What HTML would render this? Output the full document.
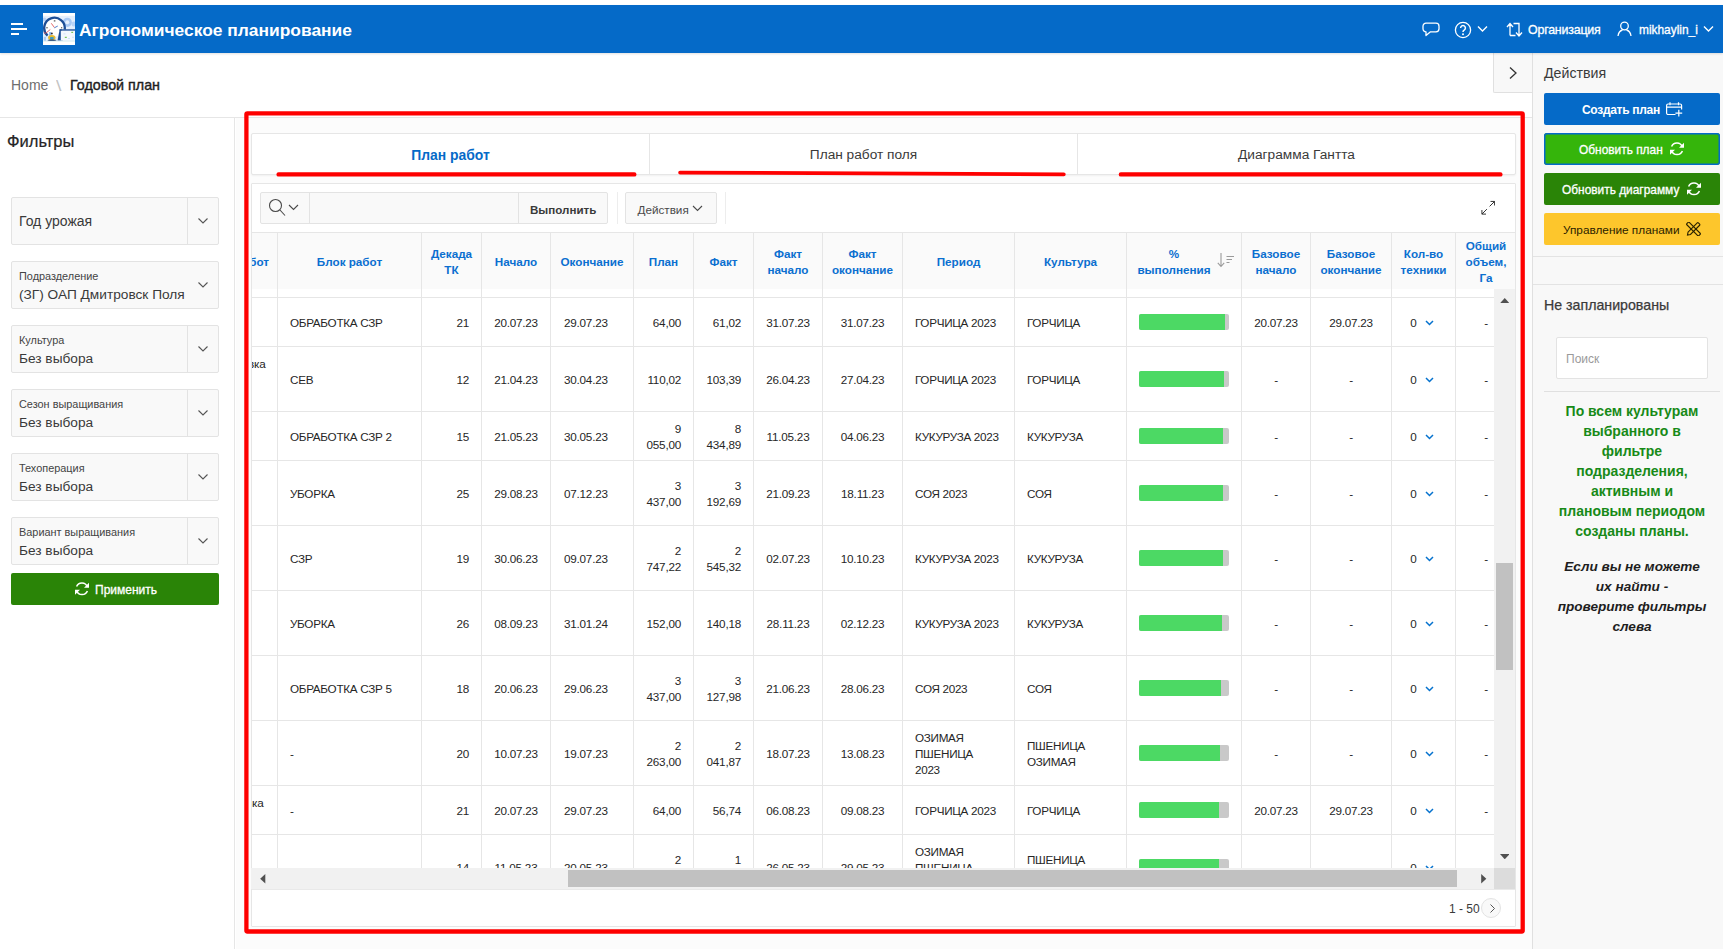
<!DOCTYPE html>
<html lang="ru">
<head>
<meta charset="utf-8">
<title>Агрономическое планирование</title>
<style>
*{box-sizing:border-box;margin:0;padding:0}
html,body{width:1723px;height:949px;overflow:hidden;background:#fff}
body{font-family:"Liberation Sans",sans-serif;color:#262626;position:relative;font-size:12px}
.abs{position:absolute}
svg{display:block}
/* header */
#hdr{left:0;top:5px;width:1723px;height:48px;background:#056ac8;box-shadow:0 1px 2px rgba(0,0,0,.12);z-index:5}
#hdr .t{color:#fff;white-space:nowrap}
#title{left:79px;top:15px;font-size:17.4px;font-weight:bold;line-height:20px}
/* breadcrumb */
#bc{left:0;top:53px;width:1532px;height:65px;background:#fff;border-bottom:1px solid #e6e6e6}
#bc .h{left:11px;top:24px;font-size:14px;color:#6e6e6e;line-height:16px}
#bc .s{left:56px;top:24px;font-size:15px;color:#c4c4c4;line-height:18px;transform:scaleX(1.3);transform-origin:0 0}
#bc .c{left:70px;top:24px;font-size:14.300px;color:#1e1e1e;line-height:16px;-webkit-text-stroke:.4px #1e1e1e}
/* sidebar */
#side{left:0;top:118px;width:235px;height:831px;background:#fff;border-right:1px solid #e6e6e6}
#side h2{position:absolute;left:7px;top:13px;font-size:16.5px;font-weight:normal;color:#262626;line-height:20px;-webkit-text-stroke:.2px #262626}
.fld{position:absolute;left:11px;width:208px;height:48px;background:#f9f9f9;border:1px solid #e3e3e3;border-radius:2px}
.fld .lb{position:absolute;left:7px;top:8px;font-size:10.900px;color:#444;line-height:13px;white-space:nowrap}
.fld .vl{position:absolute;left:7px;top:24px;font-size:13.700px;color:#3a3a3a;line-height:18px;white-space:nowrap}
.fld .big{position:absolute;left:7px;top:14px;font-size:14px;color:#3a3a3a;line-height:18px;white-space:nowrap}
.fld .dv{position:absolute;left:175px;top:-1px;width:1px;height:48px;background:#e3e3e3}
.fld svg{position:absolute;left:185px;top:19px}
#apply{left:11px;top:573px;width:208px;height:32px;background:#2a8407;border-radius:2px;color:#fff}
#apply span{position:absolute;left:84px;top:10px;font-size:12px;line-height:15px;-webkit-text-stroke:.3px #fff;white-space:nowrap}
/* main */
#main{left:236px;top:118px;width:1296px;height:831px;background:#fcfcfc}
/* right panel */
#rp{left:1532px;top:53px;width:191px;height:896px;background:#f8f8f8;border-left:1px solid #e0e0e0}
#tog{left:1493px;top:53px;width:39px;height:40px;background:#f8f8f8;border-left:1px solid #e0e0e0;border-bottom:1px solid #e0e0e0;border-bottom-left-radius:2px}
.rbtn{position:absolute;left:11px;width:176px;height:32px;border-radius:2px;white-space:nowrap}
.rbtn span{position:absolute;top:9px;font-size:12.4px;line-height:15px}

/* main inner */
#tabs{left:15px;top:15px;width:1265px;height:42px;background:#fff;border:1px solid #e6e6e6;border-radius:2px;box-shadow:0 1px 2px rgba(0,0,0,.05)}
.tab{position:absolute;top:0;height:40px;line-height:42px;text-align:center;font-size:13.700px;color:#3a3a3a;white-space:nowrap}
.tab.cur{color:#056ac8;font-weight:bold;font-size:13.900px}
#ir{left:15px;top:65px;width:1265px;height:744px;background:#fff;border:1px solid #e6e6e6;border-radius:1px}
#sb{left:9px;top:8px;width:348px;height:32px;background:#f9f9f9;border:1px solid #e3e3e3;border-radius:2px}
#sb .d1{left:48px;top:0;width:1px;height:30px;background:#e3e3e3}
#sb .d2{left:257px;top:0;width:1px;height:30px;background:#e3e3e3}
#sb .go{left:269px;top:9px;font-size:11.600px;line-height:15px;font-weight:bold;color:#3a3a3a}
.vsep{top:8px;width:1px;height:32px;background:#ededed}
#act{left:374px;top:8px;width:92px;height:32px;background:#f9f9f9;border:1px solid #e3e3e3;border-radius:2px}
#act span{position:absolute;left:11.500px;top:9px;font-size:11.700px;line-height:15px;color:#4a4a4a}
#tw{left:1px;top:48px;width:1263px;height:636px;overflow:hidden}
#tb{position:absolute;left:-2px;top:0;border-collapse:separate;border-spacing:0;table-layout:fixed;width:1266px}
#tb th{height:57px;background:#fafafa;border-top:1px solid #e6e6e6;border-left:1px solid #e6e6e6;color:#0b6fd0;font-weight:bold;font-size:11.7px;line-height:16px;text-align:center;vertical-align:middle;padding:2px 0 0;position:relative;white-space:nowrap}
#tb th.h0{border-left:0;overflow:hidden}
#tb th.h0 span{position:absolute;right:8px;top:21px}
#tb .srt{position:absolute;right:7px;top:20px}
#tb tr.gap td{height:8px;border-left:1px solid #e6e6e6;padding:0}
#tb td{border-top:1px solid #e6e6e6;border-left:1px solid #e6e6e6;font-size:11.700px;letter-spacing:-.22px;line-height:16px;color:#262626;vertical-align:middle;padding:2px 12px 0;position:relative}
#tb tr.gap td{border-top:0}
#tb td.c0{border-left:0;padding:0;overflow:hidden}
#tb tr.gap td:first-child{border-left:0}
#tb td.c0 span{position:absolute;white-space:nowrap}
#tb td.nr{text-align:right}
#tb td.dc{text-align:center;padding:2px 0 0}
#tb td.tx{letter-spacing:-.3px;font-size:11.700px}
#tb td.lc{text-align:left;padding-left:13px}
#tb th.hs{padding-right:20px}
#tb td.pb{padding:0}
.bar{position:absolute;left:12px;top:50%;margin-top:-8px;width:90px;height:16px;background:#c9c9c9;border-radius:2px;overflow:hidden}
.bar i{display:block;height:16px;background:#4cd964}
.cv{display:inline-block;margin-left:5px;vertical-align:1px}
#tb td.kt{padding-right:3px}
#vs{left:1243px;top:105px;width:21px;height:579px;background:#f1f1f1}
#hs{left:0;top:684px;width:1243px;height:21px;background:#f1f1f1}
.th{background:#c1c1c1}
#cr{left:1243px;top:684px;width:21px;height:21px;background:#dcdcdc}
#pg{left:1198px;top:718px;font-size:12px;line-height:15px;color:#3a3a3a;white-space:nowrap}
#pn{left:1230px;top:714px;width:20px;height:20px;border-radius:10px;background:#f9f9f9;border:1px solid #e3e3e3}
#red{left:8.5px;top:-6.5px;width:1280px;height:821px;border:4px solid #fe0000;border-radius:3px}
.ru{top:54px;height:4px;background:#fe0000;border-radius:2px}
</style>
</head>
<body>
<!-- HEADER -->
<div id="hdr" class="abs">
  <svg class="abs" style="left:10px;top:17px" width="18" height="14" viewBox="0 0 18 14"><path d="M1 2h12M1 7h16M1 12h8" stroke="#fff" stroke-width="1.8" fill="none"/></svg>
  <svg class="abs" style="left:43px;top:8px" width="32" height="32" viewBox="0 0 32 32">
    <rect width="32" height="32" fill="#fff"/>
    <rect y="2.800" width="32" height="25" fill="#e4effd"/>
    <circle cx="24.300" cy="9.300" r="4.600" fill="#a9c9f4"/><circle cx="24.300" cy="9.300" r="2" fill="#e4effd"/>
    <circle cx="31" cy="11" r="2.500" fill="#b9d3f6"/>
    <circle cx="1.500" cy="6.500" r="2" fill="#b9d3f6"/>
    <circle cx="11.600" cy="14.500" r="9.200" fill="#fff"/>
    <path d="M4.600 22.700A10.300 10.300 0 1 1 21.700 16.500" stroke="#1d4e96" stroke-width="2.300" fill="none"/>
    <path d="M11.400 14.500L8.300 10.300" stroke="#e2575a" stroke-width=".9"/>
    <path d="M11.400 14.800L14.800 13" stroke="#3d6fc4" stroke-width=".9"/>
    <path d="M.8 19.300l1.500 1.200 5-4" stroke="#e2575a" stroke-width=".9" fill="none"/>
    <rect x="10.800" y="7.300" width="1.600" height="1.200" fill="#555"/><rect x="3.400" y="14" width="1.200" height="1.400" fill="#555"/><rect x="18.200" y="14" width="1" height="1.400" fill="#555"/>
    <rect x="6.100" y="19" width="1.900" height="5" fill="#8fb8f0"/>
    <rect x=".8" y="23.800" width="2.200" height="4" fill="#a9c9f4"/>
    <path d="M16.700 16.300h2l1 11.300h-5.200z" fill="#1d4e96"/>
    <rect x="16.500" y="16.300" width="15.500" height="1.500" fill="#1d4e96"/>
    <rect x="17.800" y="17.800" width="14.200" height="9.700" fill="#f4f8fe"/>
    <rect x="28.300" y="18.800" width="1.800" height="1.100" fill="#6cc04a"/><rect x="21.800" y="23.800" width="2" height="1.100" fill="#6cc04a"/>
    <rect x="20.500" y="20.500" width="2" height=".8" fill="#c9dcf8"/><rect x="29" y="23.800" width="2" height=".8" fill="#c9dcf8"/><rect x="25" y="25" width="2" height=".8" fill="#c9dcf8"/>
    <ellipse cx="8.800" cy="24.600" rx="3.700" ry="2.700" fill="#e9b92e"/>
    <circle cx="8.800" cy="20.600" r="1" fill="#2b2b3a"/>
    <rect x="7" y="24" width="3.600" height="2.400" rx=".4" fill="#3f9dc2"/>
    <ellipse cx="9" cy="27.300" rx="4.500" ry=".7" fill="#1d3c6e"/>
    <rect x="0" y="27.800" width="32" height=".8" fill="#bfe3ea"/>
    <rect x="0" y="28.600" width="32" height="3.400" fill="#fff"/>
  </svg>
  <div id="title" class="abs t">Агрономическое планирование</div>
  <svg class="abs" style="left:1422px;top:17px" width="18" height="15" viewBox="0 0 18 15"><path d="M4 1.200h10a3 3 0 0 1 3 3v2.600a3 3 0 0 1-3 3H8.500L4 13.500V9.800a3 3 0 0 1-3-3V4.200a3 3 0 0 1 3-3z" stroke="#fff" stroke-width="1.300" fill="none" stroke-linejoin="round"/></svg>
  <svg class="abs" style="left:1454px;top:16px" width="18" height="18" viewBox="0 0 18 18"><circle cx="9" cy="9" r="7.600" stroke="#fff" stroke-width="1.300" fill="none"/><path d="M6.600 7a2.400 2.400 0 1 1 3.600 2.100c-.8.500-1.200.9-1.200 1.900" stroke="#fff" stroke-width="1.500" fill="none"/><circle cx="9" cy="13.200" r="1" fill="#fff"/></svg>
  <svg class="abs" style="left:1477px;top:20px" width="11" height="8" viewBox="0 0 11 8"><path d="M1 1.500l4.500 4.500L10 1.500" stroke="#fff" stroke-width="1.400" fill="none"/></svg>
  <svg class="abs" style="left:1506px;top:17px" width="17" height="15" viewBox="0 0 17 15"><path d="M4 13.500V2M1 5l3-3.500L7 5M7.500 1.500h5.500v12M10 10.500l3 3.500 3-3.500M9.500 13.500H4" stroke="#fff" stroke-width="1.300" fill="none"/></svg>
  <div class="abs t" style="left:1528px;top:18px;font-size:12.400px;line-height:15px;-webkit-text-stroke:.3px #fff;letter-spacing:-.2px">Организация</div>
  <svg class="abs" style="left:1617px;top:16px" width="15" height="16" viewBox="0 0 15 16"><circle cx="7.500" cy="5" r="3.800" stroke="#fff" stroke-width="1.300" fill="none"/><path d="M1 15c.5-3.500 2.500-5.500 4.500-6M14 15c-.5-3.500-2.500-5.500-4.500-6" stroke="#fff" stroke-width="1.300" fill="none"/></svg>
  <div class="abs t" style="left:1639px;top:18px;font-size:11.900px;line-height:15px;-webkit-text-stroke:.3px #fff">mikhaylin_i</div>
  <svg class="abs" style="left:1703px;top:20px" width="11" height="8" viewBox="0 0 11 8"><path d="M1 1.500l4.500 4.500L10 1.500" stroke="#fff" stroke-width="1.400" fill="none"/></svg>
</div>

<!-- BREADCRUMB -->
<div id="bc" class="abs">
  <div class="abs h">Home</div><div class="abs s">\</div><div class="abs c">Годовой план</div>
</div>

<!-- SIDEBAR -->
<div id="side" class="abs">
  <h2>Фильтры</h2>
  <div class="fld" style="top:79px"><div class="big">Год урожая</div><div class="dv"></div><svg width="12" height="8" viewBox="0 0 12 8"><path d="M1.5 1.5l4.5 4.5 4.5-4.5" stroke="#555" stroke-width="1.1" fill="none"/></svg></div>
  <div class="fld" style="top:143px"><div class="lb">Подразделение</div><div class="vl">(ЗГ) ОАП Дмитровск Поля</div><svg width="12" height="8" viewBox="0 0 12 8"><path d="M1.5 1.5l4.5 4.5 4.5-4.5" stroke="#555" stroke-width="1.1" fill="none"/></svg></div>
  <div class="fld" style="top:207px"><div class="lb">Культура</div><div class="vl">Без выбора</div><div class="dv"></div><svg width="12" height="8" viewBox="0 0 12 8"><path d="M1.5 1.5l4.5 4.5 4.5-4.5" stroke="#555" stroke-width="1.1" fill="none"/></svg></div>
  <div class="fld" style="top:271px"><div class="lb">Сезон выращивания</div><div class="vl">Без выбора</div><div class="dv"></div><svg width="12" height="8" viewBox="0 0 12 8"><path d="M1.5 1.5l4.5 4.5 4.5-4.5" stroke="#555" stroke-width="1.1" fill="none"/></svg></div>
  <div class="fld" style="top:335px"><div class="lb">Техоперация</div><div class="vl">Без выбора</div><div class="dv"></div><svg width="12" height="8" viewBox="0 0 12 8"><path d="M1.5 1.5l4.5 4.5 4.5-4.5" stroke="#555" stroke-width="1.1" fill="none"/></svg></div>
  <div class="fld" style="top:399px"><div class="lb">Вариант выращивания</div><div class="vl">Без выбора</div><div class="dv"></div><svg width="12" height="8" viewBox="0 0 12 8"><path d="M1.5 1.5l4.5 4.5 4.5-4.5" stroke="#555" stroke-width="1.1" fill="none"/></svg></div>
</div>

<div id="apply" class="abs"><svg class="abs" style="left:63px;top:8px" width="16" height="16" viewBox="0 0 16 16"><path d="M13.300 5.800A5.700 5.700 0 0 0 2.600 5.600M2.700 9.700a5.700 5.700 0 0 0 10.700.300" stroke="#fff" stroke-width="1.500" fill="none"/><path d="M15 1.800v5H10zM1 13.700v-5h5z" fill="#fff"/></svg><span>Применить</span></div>

<!-- MAIN -->
<!--MAIN-START-->
<div id="main" class="abs">
  <div id="tabs" class="abs">
    <div class="tab cur" style="left:0;width:397px">План работ</div>
    <div class="tab" style="left:397px;width:428px;border-left:1px solid #e6e6e6">План работ поля</div>
    <div class="tab" style="left:825px;width:438px;border-left:1px solid #e6e6e6">Диаграмма Гантта</div>
  </div>
  <div id="ir" class="abs"><div class="abs" style="left:-1px;top:0">
    <div id="sb" class="abs"><svg class="abs" style="left:6.500px;top:5px" width="18" height="19" viewBox="0 0 18 19"><circle cx="7.5" cy="7.500" r="6" stroke="#4a4a4a" stroke-width="1.1" fill="none"/><path d="M12 12l5 5.500" stroke="#4a4a4a" stroke-width="1.1"/></svg><svg class="abs" style="left:27px;top:11px" width="11" height="7" viewBox="0 0 11 7"><path d="M1 1l4.500 4.500L10 1" stroke="#4a4a4a" stroke-width="1.1" fill="none"/></svg><div class="abs d1"></div><div class="abs d2"></div><span class="abs go">Выполнить</span></div>
    <div class="abs vsep" style="left:366px"></div>
    <div id="act" class="abs"><span>Действия</span><svg class="abs" style="left:66px;top:11.500px" width="11" height="7" viewBox="0 0 11 7"><path d="M1 1l4.500 4.500L10 1" stroke="#4a4a4a" stroke-width="1.1" fill="none"/></svg></div>
    <div class="abs vsep" style="left:474px"></div>
    <svg class="abs" style="left:1229.500px;top:15.500px" width="14.500" height="15.500" viewBox="0 0 16 16"><path d="M9.500 6.500L15 1M10.500 1H15v4.500M6.500 9.500L1 15M1 10.500V15h4.500" stroke="#333" stroke-width="1.1" fill="none"/></svg>
    <div id="tw" class="abs">
      <table id="tb"><colgroup><col style="width:27px"><col style="width:144px"><col style="width:60px"><col style="width:69px"><col style="width:83px"><col style="width:60px"><col style="width:60px"><col style="width:69px"><col style="width:80px"><col style="width:112px"><col style="width:112px"><col style="width:115px"><col style="width:69px"><col style="width:81px"><col style="width:64px"><col style="width:61px"></colgroup>
        <thead><tr><th class="h0"><span>Вид&nbsp;работ</span></th><th>Блок работ</th><th>Декада<br>ТК</th><th>Начало</th><th>Окончание</th><th>План</th><th>Факт</th><th>Факт<br>начало</th><th>Факт<br>окончание</th><th>Период</th><th>Культура</th><th class="hs">%<br>выполнения<svg class="srt" width="17" height="15" viewBox="0 0 17 15"><path d="M4 0v13M.8 9.800L4 13.500l3.200-3.700M9.500 3.500h7.500M9.500 6.500h5.500M9.500 9.500h3" stroke="#9a9a9a" stroke-width="1.1" fill="none"/></svg></th><th>Базовое<br>начало</th><th>Базовое<br>окончание</th><th>Кол-во<br>техники</th><th>Общий<br>объем,<br>Га</th></tr>
        <tr class="gap"><td></td><td></td><td></td><td></td><td></td><td></td><td></td><td></td><td></td><td></td><td></td><td></td><td></td><td></td><td></td><td></td></tr></thead><tbody>
        <tr style="height:49px"><td class="c0"></td><td class="tx">ОБРАБОТКА СЗР</td><td class="nr">21</td><td class="dc">20.07.23</td><td class="dc lc">29.07.23</td><td class="nr">64,00</td><td class="nr">61,02</td><td class="dc">31.07.23</td><td class="dc">31.07.23</td><td class="tx">ГОРЧИЦА 2023</td><td class="tx">ГОРЧИЦА</td><td class="pb"><div class="bar"><i style="width:85.5px"></i></div></td><td class="dc">20.07.23</td><td class="dc">29.07.23</td><td class="dc kt">0 <svg class="cv" width="9" height="6" viewBox="0 0 9 6"><path d="M1 1l3.500 3.500 3.500-3.500" stroke="#0572ce" stroke-width="1.5" fill="none"/></svg></td><td class="dc">-</td></tr>
        <tr style="height:65px"><td class="c0"><span style="top:9px;left:-2px">вка</span></td><td class="tx">СЕВ</td><td class="nr">12</td><td class="dc">21.04.23</td><td class="dc lc">30.04.23</td><td class="nr">110,02</td><td class="nr">103,39</td><td class="dc">26.04.23</td><td class="dc">27.04.23</td><td class="tx">ГОРЧИЦА 2023</td><td class="tx">ГОРЧИЦА</td><td class="pb"><div class="bar"><i style="width:84.5px"></i></div></td><td class="dc">-</td><td class="dc">-</td><td class="dc kt">0 <svg class="cv" width="9" height="6" viewBox="0 0 9 6"><path d="M1 1l3.500 3.500 3.500-3.500" stroke="#0572ce" stroke-width="1.5" fill="none"/></svg></td><td class="dc">-</td></tr>
        <tr style="height:49px"><td class="c0"></td><td class="tx">ОБРАБОТКА СЗР 2</td><td class="nr">15</td><td class="dc">21.05.23</td><td class="dc lc">30.05.23</td><td class="nr">9<br>055,00</td><td class="nr">8<br>434,89</td><td class="dc">11.05.23</td><td class="dc">04.06.23</td><td class="tx">КУКУРУЗА 2023</td><td class="tx">КУКУРУЗА</td><td class="pb"><div class="bar"><i style="width:83.5px"></i></div></td><td class="dc">-</td><td class="dc">-</td><td class="dc kt">0 <svg class="cv" width="9" height="6" viewBox="0 0 9 6"><path d="M1 1l3.500 3.500 3.500-3.500" stroke="#0572ce" stroke-width="1.5" fill="none"/></svg></td><td class="dc">-</td></tr>
        <tr style="height:65px"><td class="c0"></td><td class="tx">УБОРКА</td><td class="nr">25</td><td class="dc">29.08.23</td><td class="dc lc">07.12.23</td><td class="nr">3<br>437,00</td><td class="nr">3<br>192,69</td><td class="dc">21.09.23</td><td class="dc">18.11.23</td><td class="tx">СОЯ 2023</td><td class="tx">СОЯ</td><td class="pb"><div class="bar"><i style="width:83.5px"></i></div></td><td class="dc">-</td><td class="dc">-</td><td class="dc kt">0 <svg class="cv" width="9" height="6" viewBox="0 0 9 6"><path d="M1 1l3.500 3.500 3.500-3.500" stroke="#0572ce" stroke-width="1.5" fill="none"/></svg></td><td class="dc">-</td></tr>
        <tr style="height:65px"><td class="c0"></td><td class="tx">СЗР</td><td class="nr">19</td><td class="dc">30.06.23</td><td class="dc lc">09.07.23</td><td class="nr">2<br>747,22</td><td class="nr">2<br>545,32</td><td class="dc">02.07.23</td><td class="dc">10.10.23</td><td class="tx">КУКУРУЗА 2023</td><td class="tx">КУКУРУЗА</td><td class="pb"><div class="bar"><i style="width:83.5px"></i></div></td><td class="dc">-</td><td class="dc">-</td><td class="dc kt">0 <svg class="cv" width="9" height="6" viewBox="0 0 9 6"><path d="M1 1l3.500 3.500 3.500-3.500" stroke="#0572ce" stroke-width="1.5" fill="none"/></svg></td><td class="dc">-</td></tr>
        <tr style="height:65px"><td class="c0"></td><td class="tx">УБОРКА</td><td class="nr">26</td><td class="dc">08.09.23</td><td class="dc lc">31.01.24</td><td class="nr">152,00</td><td class="nr">140,18</td><td class="dc">28.11.23</td><td class="dc">02.12.23</td><td class="tx">КУКУРУЗА 2023</td><td class="tx">КУКУРУЗА</td><td class="pb"><div class="bar"><i style="width:83px"></i></div></td><td class="dc">-</td><td class="dc">-</td><td class="dc kt">0 <svg class="cv" width="9" height="6" viewBox="0 0 9 6"><path d="M1 1l3.500 3.500 3.500-3.500" stroke="#0572ce" stroke-width="1.5" fill="none"/></svg></td><td class="dc">-</td></tr>
        <tr style="height:65px"><td class="c0"></td><td class="tx">ОБРАБОТКА СЗР 5</td><td class="nr">18</td><td class="dc">20.06.23</td><td class="dc lc">29.06.23</td><td class="nr">3<br>437,00</td><td class="nr">3<br>127,98</td><td class="dc">21.06.23</td><td class="dc">28.06.23</td><td class="tx">СОЯ 2023</td><td class="tx">СОЯ</td><td class="pb"><div class="bar"><i style="width:81.5px"></i></div></td><td class="dc">-</td><td class="dc">-</td><td class="dc kt">0 <svg class="cv" width="9" height="6" viewBox="0 0 9 6"><path d="M1 1l3.500 3.500 3.500-3.500" stroke="#0572ce" stroke-width="1.5" fill="none"/></svg></td><td class="dc">-</td></tr>
        <tr style="height:65px"><td class="c0"></td><td class="tx">-</td><td class="nr">20</td><td class="dc">10.07.23</td><td class="dc lc">19.07.23</td><td class="nr">2<br>263,00</td><td class="nr">2<br>041,87</td><td class="dc">18.07.23</td><td class="dc">13.08.23</td><td class="tx">ОЗИМАЯ<br>ПШЕНИЦА<br>2023</td><td class="tx">ПШЕНИЦА<br>ОЗИМАЯ</td><td class="pb"><div class="bar"><i style="width:80.5px"></i></div></td><td class="dc">-</td><td class="dc">-</td><td class="dc kt">0 <svg class="cv" width="9" height="6" viewBox="0 0 9 6"><path d="M1 1l3.500 3.500 3.500-3.500" stroke="#0572ce" stroke-width="1.5" fill="none"/></svg></td><td class="dc">-</td></tr>
        <tr style="height:49px"><td class="c0"><span style="top:9px;left:-4px">вка</span></td><td class="tx">-</td><td class="nr">21</td><td class="dc">20.07.23</td><td class="dc lc">29.07.23</td><td class="nr">64,00</td><td class="nr">56,74</td><td class="dc">06.08.23</td><td class="dc">09.08.23</td><td class="tx">ГОРЧИЦА 2023</td><td class="tx">ГОРЧИЦА</td><td class="pb"><div class="bar"><i style="width:79.5px"></i></div></td><td class="dc">20.07.23</td><td class="dc">29.07.23</td><td class="dc kt">0 <svg class="cv" width="9" height="6" viewBox="0 0 9 6"><path d="M1 1l3.500 3.500 3.500-3.500" stroke="#0572ce" stroke-width="1.5" fill="none"/></svg></td><td class="dc">-</td></tr>
        <tr style="height:65px"><td class="c0"></td><td class="tx">-</td><td class="nr">14</td><td class="dc">11.05.23</td><td class="dc lc">20.05.23</td><td class="nr">2<br>018,00</td><td class="nr">1<br>806,43</td><td class="dc">26.05.23</td><td class="dc">29.05.23</td><td class="tx">ОЗИМАЯ<br>ПШЕНИЦА<br>2023</td><td class="tx">ПШЕНИЦА<br>ОЗИМАЯ</td><td class="pb"><div class="bar"><i style="width:79.5px"></i></div></td><td class="dc">-</td><td class="dc">-</td><td class="dc kt">0 <svg class="cv" width="9" height="6" viewBox="0 0 9 6"><path d="M1 1l3.500 3.500 3.500-3.500" stroke="#0572ce" stroke-width="1.5" fill="none"/></svg></td><td class="dc">-</td></tr>
      </tbody></table>
    </div>
    <div id="vs" class="abs"><svg class="abs" style="left:5.700px;top:8.800px" width="9.500" height="5.400" viewBox="0 0 11 6"><path d="M0 6L5.500 0 11 6z" fill="#505050"/></svg><div class="abs th" style="left:2px;top:274px;width:17px;height:107px"></div><svg class="abs" style="left:5.700px;top:564.800px" width="9.500" height="5.400" viewBox="0 0 11 6"><path d="M0 0L5.500 6 11 0z" fill="#505050"/></svg></div>
    <div id="hs" class="abs"><svg class="abs" style="left:9px;top:6px" width="5.500" height="9.500" viewBox="0 0 6 11"><path d="M6 0L0 5.500 6 11z" fill="#505050"/></svg><div class="abs th" style="left:317px;top:2px;width:889px;height:17px"></div><svg class="abs" style="left:1230px;top:6px" width="5.500" height="9.500" viewBox="0 0 6 11"><path d="M0 0L6 5.500 0 11z" fill="#505050"/></svg></div>
    <div id="cr" class="abs"></div>
    <div class="abs" style="left:1px;top:705px;width:1263px;height:1px;background:#e9e9e9"></div>
    <div id="pg" class="abs">1 - 50</div>
    <div id="pn" class="abs"><svg class="abs" style="left:6.500px;top:3.500px" width="7" height="11" viewBox="0 0 7 11"><path d="M1.500 1.500l4 4-4 4" stroke="#555" stroke-width="1" fill="none"/></svg></div>
  </div></div>
  <svg class="abs" style="left:0;top:-10px" width="1296" height="841" viewBox="236 108 1296 841"><rect x="246.400" y="113.300" width="1276.300" height="818.200" rx="1" fill="none" stroke="#fe0000" stroke-width="4.300"/><g stroke="#fe0000" stroke-linecap="round"><path d="M278.600 174.400H634.300M1120.900 174.400H1500.400" stroke-width="4.400"/><path d="M680.100 172.600L1063.800 174.300" stroke-width="3.800"/></g></svg>

</div>
<!--MAIN-END-->

<!-- RIGHT PANEL -->
<div id="tog" class="abs"><svg class="abs" style="left:14px;top:13px" width="10" height="14" viewBox="0 0 10 14"><path d="M2 1.5l6 5.5-6 5.5" stroke="#333" stroke-width="1.3" fill="none"/></svg></div>
<div id="rp" class="abs">
  <div class="abs" style="left:11px;top:11px;font-size:14.2px;line-height:18px;color:#3a3a3a">Действия</div>
  <div class="rbtn" style="top:40px;background:#056ac8;color:#fff"><span style="left:38px;top:10px;font-weight:bold;font-size:12px;letter-spacing:-.3px">Создать план</span>
    <svg class="abs" style="left:122px;top:9px" width="17" height="15" viewBox="0 0 17 15"><path d="M9.500 12.500H2.100A1.500 1.500 0 0 1 .6 11V3.500A1.500 1.500 0 0 1 2.100 2h12a1.500 1.500 0 0 1 1.500 1.500v4M.6 5.200h15M4 .3v3M12.500 .3v3M12.800 7.800v6.800M9.400 11.200h6.800" stroke="#fff" stroke-width="1.200" fill="none"/></svg></div>
  <div class="rbtn" style="top:80px;background:#35b50b;color:#fff;box-shadow:inset 0 0 0 1.500px #056ac8;border-radius:3px"><span style="left:35px;top:10px;font-size:11.900px;-webkit-text-stroke:.3px #fff">Обновить план</span>
    <svg class="abs" style="left:125px;top:8px" width="16" height="16" viewBox="0 0 16 16"><path d="M13.300 5.800A5.700 5.700 0 0 0 2.600 5.600M2.700 9.700a5.700 5.700 0 0 0 10.700.300" stroke="#fff" stroke-width="1.500" fill="none"/><path d="M15 1.800v5H10zM1 13.700v-5h5z" fill="#fff"/></svg></div>
  <div class="rbtn" style="top:120px;background:#2a8407;color:#fff"><span style="left:18px;top:10px;font-size:11.900px;-webkit-text-stroke:.3px #fff">Обновить диаграмму</span>
    <svg class="abs" style="left:142px;top:8px" width="16" height="16" viewBox="0 0 16 16"><path d="M13.300 5.800A5.700 5.700 0 0 0 2.600 5.600M2.700 9.700a5.700 5.700 0 0 0 10.700.300" stroke="#fff" stroke-width="1.500" fill="none"/><path d="M15 1.800v5H10zM1 13.700v-5h5z" fill="#fff"/></svg></div>
  <div class="rbtn" style="top:160px;background:#fdc62c;color:#2b2200"><span style="left:19px;top:10px;font-size:11.800px">Управление планами</span>
    <svg class="abs" style="left:142px;top:9px" width="15" height="14" viewBox="0 0 15 14"><g stroke="#2b2200" stroke-width="1.100" fill="none"><g transform="rotate(45 7.500 7)"><rect x="-1" y="5.300" width="17" height="3.400" rx=".8"/></g><g transform="rotate(-45 7.500 7)"><path d="M1.500 5.300h13a.8.8 0 0 1 .8.800v1.800a.8.800 0 0 1-.8.800h-13L-1 7z"/></g></g></svg></div>
  <div class="abs" style="left:0;top:203px;width:190px;height:1px;background:#e3e3e3"></div>
  <div class="abs" style="left:0;top:231px;width:190px;height:1px;background:#e3e3e3"></div>
  <div class="abs" style="left:11px;top:243px;font-size:14.200px;line-height:18px;color:#3a3a3a;-webkit-text-stroke:.25px #3a3a3a">Не запланированы</div>
  <div class="abs" style="left:23px;top:284px;width:152px;height:42px;background:#fff;border:1px solid #e3e3e3;border-radius:2px"><span class="abs" style="left:9px;top:14px;font-size:12px;line-height:15px;color:#9a9a9a">Поиск</span></div>
  <div class="abs" style="left:11px;top:338px;width:176px;height:1px;background:#e0e0e0"></div>
  <div class="abs" style="left:11px;top:348px;width:176px;text-align:center;font-size:14px;line-height:20px;font-weight:bold;color:#178a17">По всем культурам<br>выбранного в<br>фильтре<br>подразделения,<br>активным и<br>плановым периодом<br>созданы планы.</div>
  <div class="abs" style="left:11px;top:504px;width:176px;text-align:center;font-size:13.600px;line-height:20px;font-weight:bold;font-style:italic;color:#1e1e1e">Если вы не можете<br>их найти -<br>проверите фильтры<br>слева</div>
</div>

</body>
</html>
